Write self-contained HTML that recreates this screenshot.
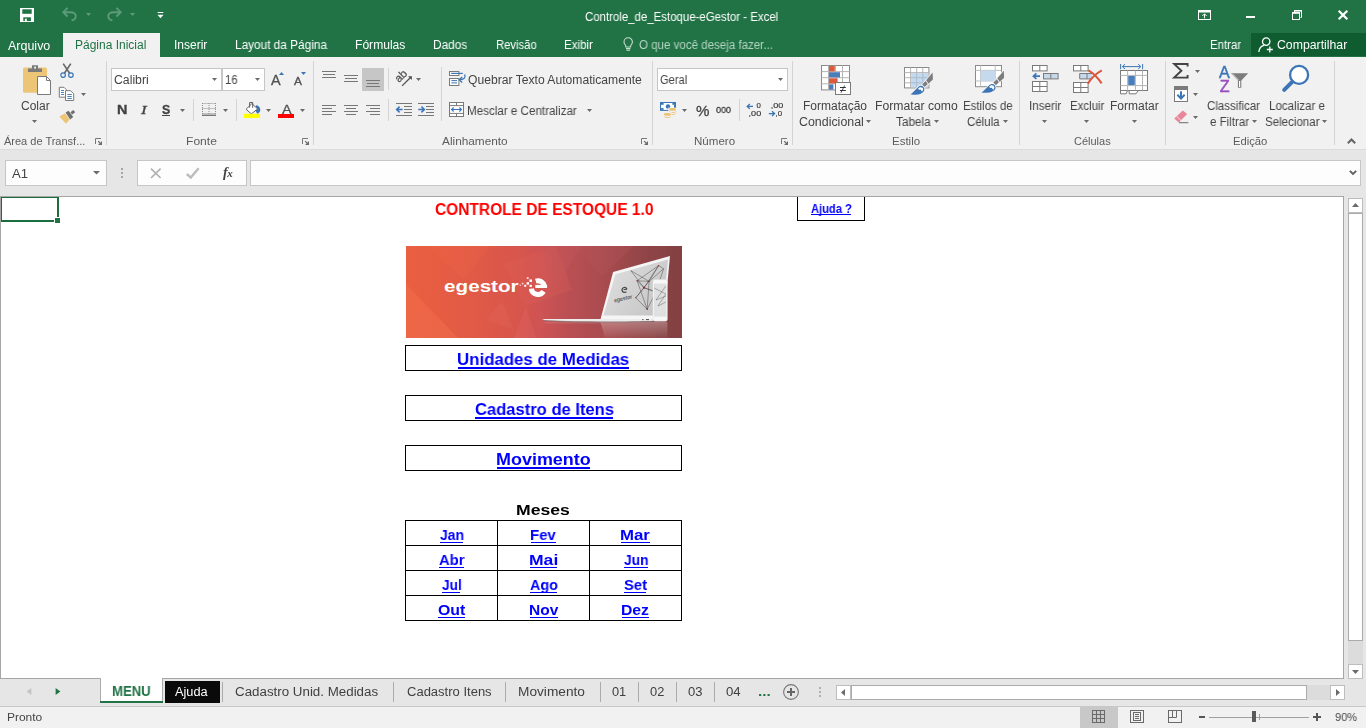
<!DOCTYPE html>
<html lang="pt-BR"><head><meta charset="utf-8"><title>Controle_de_Estoque-eGestor - Excel</title>
<style>
html,body{margin:0;padding:0}
body{width:1366px;height:728px;overflow:hidden;position:relative;background:#e6e6e6;font-family:"Liberation Sans",sans-serif}
.g{position:absolute;left:0;top:0;width:0;height:0}
.b{position:absolute;box-sizing:border-box;display:block}
.t{position:absolute;white-space:nowrap;line-height:20px;transform-origin:0 0;display:block;will-change:transform}
svg{overflow:visible}
.hv{-webkit-text-stroke:0.3px currentColor}
</style></head><body>
<div class="g" id="titlebar">
<div class="b" style="left:0px;top:0px;width:1366px;height:57px;background:#217346"></div>
<span class="t" style="left:584.93px;top:7px;font-size:12px;color:#fff;transform:scaleX(0.9527)">Controle_de_Estoque-eGestor - Excel</span>
<div class="b" style="left:63px;top:33px;width:97px;height:24px;background:#f1f1f1"></div>
<div class="b" style="left:1251px;top:33px;width:115px;height:23px;background:#0f5c30"></div>
<svg class="b" style="left:20px;top:8px" width="14" height="14" viewBox="0 0 14 14"><rect x="0" y="0" width="14" height="14" fill="#fff"/><rect x="2.3" y="1.3" width="9.4" height="4.5" fill="#217346"/><rect x="3.3" y="9.3" width="7.6" height="3.8" fill="#217346"/><rect x="4.9" y="10.7" width="1.9" height="2.6" fill="#fff"/></svg>
<svg class="b" style="left:62px;top:7px" width="16" height="15" viewBox="0 0 16 15"><path d="M1.2 5.2 H8.5 C12.6 5.2 14.6 8 13.6 10.6 C13 12.2 11.5 13.2 9.6 13.6" fill="none" stroke="#5d9b79" stroke-width="1.9"/><path d="M5.6 0.9 L1.3 5.2 L5.6 9.5" fill="none" stroke="#5d9b79" stroke-width="1.9"/></svg>
<svg class="b" style="left:86px;top:13px" width="5" height="3" viewBox="0 0 5 3"><path d="M0 0 H5 L2.5 3 Z" fill="#5d9b79"/></svg>
<svg class="b" style="left:106px;top:7px" width="16" height="15" viewBox="0 0 16 15"><path d="M14.8 5.2 H7.5 C3.4 5.2 1.4 8 2.4 10.6 C3 12.2 4.5 13.2 6.4 13.6" fill="none" stroke="#5d9b79" stroke-width="1.9"/><path d="M10.4 0.9 L14.7 5.2 L10.4 9.5" fill="none" stroke="#5d9b79" stroke-width="1.9"/></svg>
<svg class="b" style="left:130px;top:13px" width="5" height="3" viewBox="0 0 5 3"><path d="M0 0 H5 L2.5 3 Z" fill="#5d9b79"/></svg>
<svg class="b" style="left:157px;top:12px" width="7" height="7" viewBox="0 0 7 7"><rect x="0.7" y="0" width="5.6" height="1" fill="#fff"/><path d="M0.5 2.8 H6.5 L3.5 6.2 Z" fill="#fff"/></svg>
<svg class="b" style="left:1198px;top:10px" width="13" height="10" viewBox="0 0 13 10"><rect x="0.5" y="0.5" width="12" height="9" fill="none" stroke="#fff" stroke-width="1"/><rect x="0.5" y="0.5" width="12" height="2" fill="#fff"/><path d="M6.5 8.3 V4 M4.3 6 L6.5 3.8 L8.7 6" fill="none" stroke="#fff" stroke-width="1"/></svg>
<div class="b" style="left:1246px;top:16px;width:9px;height:2px;background:#fff"></div>
<svg class="b" style="left:1292px;top:10px" width="11" height="10" viewBox="0 0 11 10"><path d="M2.5 2 V0.5 H9.5 V7.5 H8.5" fill="none" stroke="#fff" stroke-width="1"/><rect x="2" y="0" width="8" height="1.6" fill="#fff"/><rect x="0.5" y="2.5" width="7" height="7" fill="none" stroke="#fff" stroke-width="1"/><rect x="0" y="2" width="8" height="1.8" fill="#fff"/></svg>
<svg class="b" style="left:1338px;top:10px" width="10" height="10" viewBox="0 0 10 10"><path d="M0.7 0.7 L9.3 9.3 M9.3 0.7 L0.7 9.3" fill="none" stroke="#fff" stroke-width="2.2"/></svg>
<svg class="b" style="left:623px;top:37px" width="11" height="14" viewBox="0 0 11 14"><path d="M5.2 0.8 C2.6 0.8 1 2.7 1 4.9 C1 6.6 2.2 7.6 2.8 8.8 V10 H7.6 V8.8 C8.2 7.6 9.4 6.6 9.4 4.9 C9.4 2.7 7.8 0.8 5.2 0.8 Z M3 11.6 H7.4 M3.4 13.2 H7" fill="none" stroke="#c3dccb" stroke-width="1.1"/></svg>
<svg class="b" style="left:1258px;top:37px" width="16" height="16" viewBox="0 0 16 16"><circle cx="8.2" cy="4.6" r="3.7" fill="none" stroke="#fff" stroke-width="1.3"/><path d="M0.8 15 C1.3 10.8 3.6 8.9 6 8.4" fill="none" stroke="#fff" stroke-width="1.3"/><path d="M11.8 9.5 V15.5 M8.8 12.5 H14.8" fill="none" stroke="#fff" stroke-width="1.3"/></svg>
<span class="t" style="left:8.00px;top:36px;font-size:12px;color:#fff;transform:scaleX(1.0398)">Arquivo</span>
<span class="t" style="left:75.44px;top:35px;font-size:12px;color:#217346;transform:scaleX(0.9948)">Página Inicial</span>
<span class="t" style="left:173.82px;top:35px;font-size:12px;color:#fff;transform:scaleX(1.0009)">Inserir</span>
<span class="t" style="left:235.06px;top:35px;font-size:12px;color:#fff;transform:scaleX(0.9842)">Layout da Página</span>
<span class="t" style="left:355.03px;top:35px;font-size:12px;color:#fff;transform:scaleX(1.0076)">Fórmulas</span>
<span class="t" style="left:433.25px;top:35px;font-size:12px;color:#fff;transform:scaleX(0.9850)">Dados</span>
<span class="t" style="left:495.50px;top:35px;font-size:12px;color:#fff;transform:scaleX(0.9377)">Revisão</span>
<span class="t" style="left:564.48px;top:35px;font-size:12px;color:#fff;transform:scaleX(0.9633)">Exibir</span>
<span class="t" style="left:1209.79px;top:35px;font-size:12px;color:#fff;transform:scaleX(0.9515)">Entrar</span>
<span class="t" style="left:1276.99px;top:35px;font-size:12px;color:#fff;transform:scaleX(1.0233)">Compartilhar</span>
<span class="t" style="left:638.78px;top:35px;font-size:12px;color:#b4d3c0;transform:scaleX(0.9609)">O que você deseja fazer...</span>
</div>
<div class="g" id="ribbon">
<div class="b" style="left:0px;top:57px;width:1366px;height:92px;background:#f1f1f1"></div>
<div class="b" style="left:0px;top:149px;width:1366px;height:1px;background:#dcdcdc"></div>
<div class="b" style="left:0px;top:150px;width:1366px;height:46px;background:#e6e6e6"></div>
<div class="b" style="left:106px;top:61px;width:1px;height:84px;background:#d4d4d4"></div>
<div class="b" style="left:313px;top:61px;width:1px;height:84px;background:#d4d4d4"></div>
<div class="b" style="left:652px;top:61px;width:1px;height:84px;background:#d4d4d4"></div>
<div class="b" style="left:792px;top:61px;width:1px;height:84px;background:#d4d4d4"></div>
<div class="b" style="left:1019px;top:61px;width:1px;height:84px;background:#d4d4d4"></div>
<div class="b" style="left:1165px;top:61px;width:1px;height:84px;background:#d4d4d4"></div>
<div class="b" style="left:1334px;top:61px;width:1px;height:84px;background:#d4d4d4"></div>
<div class="g" id="grp-clipboard">
<svg class="b" style="left:22px;top:64px" width="30" height="32" viewBox="0 0 30 32"><rect x="1" y="3.6" width="24" height="25.2" rx="1.6" fill="#ecc577"/><path d="M6 8 V4.4 H10 V1.2 H16 V4.4 H20 V8 Z" fill="#7a7a7a"/><rect x="12.2" y="2.6" width="1.8" height="2" fill="#f1f1f1"/><path d="M15.5 12.5 H24.5 L28.5 16.5 V30.5 H15.5 Z" fill="#fff" stroke="#7a7a7a" stroke-width="1"/><path d="M24.5 12.5 V16.5 H28.5" fill="none" stroke="#7a7a7a" stroke-width="1"/></svg>
<span class="t" style="left:21.01px;top:96px;font-size:12px;color:#444;transform:scaleX(0.9892)">Colar</span>
<svg class="b" style="left:32px;top:120px" width="5" height="3" viewBox="0 0 5 3"><path d="M0 0 H5 L2.5 3 Z" fill="#6a6a6a"/></svg>
<svg class="b" style="left:59px;top:63px" width="16" height="16" viewBox="0 0 16 16"><path d="M4.2 0.6 L10.6 10.2 M11.8 0.6 L5.4 10.2" fill="none" stroke="#6a6a6a" stroke-width="1.7"/><circle cx="4.1" cy="12.1" r="2.3" fill="none" stroke="#3b75b7" stroke-width="1.2"/><circle cx="11.9" cy="12.1" r="2.3" fill="none" stroke="#3b75b7" stroke-width="1.2"/></svg>
<svg class="b" style="left:58px;top:86px" width="17" height="16" viewBox="0 0 17 16"><path d="M1.3 1.3 H6 L8.3 3.6 V11.2 H1.3 Z" fill="#fff" stroke="#7a7a7a" stroke-width="1"/><path d="M3 4.5 H6 M3 6.5 H6 M3 8.5 H6" stroke="#3b75b7" stroke-width="0.9"/><path d="M7.5 4.7 H12.6 L15.7 7.8 V14.5 H7.5 Z" fill="#fff" stroke="#7a7a7a" stroke-width="1"/><path d="M9.3 8.5 H13.8 M9.3 10.5 H13.8 M9.3 12.5 H13.8" stroke="#3b75b7" stroke-width="0.9"/></svg>
<svg class="b" style="left:81px;top:93px" width="5" height="3" viewBox="0 0 5 3"><path d="M0 0 H5 L2.5 3 Z" fill="#6a6a6a"/></svg>
<svg class="b" style="left:59px;top:110px" width="17" height="15" viewBox="0 0 17 15"><path d="M0.4 6.6 L6 3.2 L10.6 9.6 L7 13.8 Z" fill="#ecc577"/><path d="M6.6 2.6 L9.6 0.8 L14.2 7 L11.2 9.4 Z" fill="#6f6f6f"/><path d="M11.4 2.2 L14.4 0 L16.2 2.2 L13.2 4.6 Z" fill="#6f6f6f"/></svg>
<span class="t" style="left:4.40px;top:131px;font-size:11px;color:#5c5c5c;transform:scaleX(0.9972)">Área de Transf...</span>
<svg class="b" style="left:95px;top:138px" width="7" height="7" viewBox="0 0 7 7"><path d="M0.5 6 V0.5 H6" fill="none" stroke="#787878" stroke-width="1"/><path d="M7 3 V7 H3 Z" fill="#6a6a6a"/><path d="M3.2 3.2 L5 5" stroke="#6a6a6a" stroke-width="1.2"/></svg>
</div>
<div class="g" id="grp-font">
<div class="b" style="left:111px;top:68px;width:111px;height:23px;background:#fff;border:1px solid #c6c6c6"></div>
<div class="b" style="left:222px;top:68px;width:43px;height:23px;background:#fff;border:1px solid #c6c6c6"></div>
<span class="t" style="left:113.99px;top:70px;font-size:12px;color:#444;transform:scaleX(1.0212)">Calibri</span>
<svg class="b" style="left:212px;top:78px" width="5" height="3" viewBox="0 0 5 3"><path d="M0 0 H5 L2.5 3 Z" fill="#6a6a6a"/></svg>
<span class="t" style="left:225.05px;top:70px;font-size:12px;color:#444;transform:scaleX(0.9404)">16</span>
<svg class="b" style="left:255px;top:78px" width="5" height="3" viewBox="0 0 5 3"><path d="M0 0 H5 L2.5 3 Z" fill="#6a6a6a"/></svg>
<span class="t hv" style="left:271.20px;top:70px;font-size:14px;color:#505050;transform:scaleX(1.0311)">A</span>
<svg class="b" style="left:279px;top:72px" width="5" height="3" viewBox="0 0 5 3"><path d="M0 3 H5 L2.5 0 Z" fill="#3b75b7"/></svg>
<span class="t hv" style="left:294.00px;top:71px;font-size:11px;color:#505050;transform:scaleX(1.0800)">A</span>
<svg class="b" style="left:301px;top:72px" width="5" height="3" viewBox="0 0 5 3"><path d="M0 0 H5 L2.5 3 Z" fill="#3b75b7"/></svg>
<span class="t hv" style="left:116.86px;top:100px;font-size:12.5px;color:#404040;transform:scaleX(1.1525);font-weight:bold">N</span>
<span class="t" style="left:140.6px;top:100px;font-size:13.5px;color:#454545;font-family:'Liberation Serif',serif;font-style:italic;transform:scaleX(1.25);-webkit-text-stroke:0.35px currentColor">I</span>
<span class="t hv" style="left:161.66px;top:100px;font-size:12.5px;color:#404040;transform:scaleX(0.9826);font-weight:bold">S</span>
<div class="b" style="left:162px;top:115px;width:8px;height:1px;background:#444"></div>
<svg class="b" style="left:180px;top:109px" width="5" height="3" viewBox="0 0 5 3"><path d="M0 0 H5 L2.5 3 Z" fill="#6a6a6a"/></svg>
<div class="b" style="left:193px;top:99px;width:1px;height:22px;background:#d4d4d4"></div>
<div class="b" style="left:236px;top:99px;width:1px;height:22px;background:#d4d4d4"></div>
<svg class="b" style="left:202px;top:102px" width="14" height="14" viewBox="0 0 14 14"><path d="M0.5 1.5 H13.5 M0.5 6.5 H13.5 M0.5 11.5 H13.5" stroke="#8e8e8e" stroke-width="1" stroke-dasharray="1 1"/><path d="M0.5 1 V12 M7 1 V12 M13.5 1 V12" stroke="#8e8e8e" stroke-width="1" stroke-dasharray="1 1"/><rect x="0" y="12.6" width="14" height="1.3" fill="#6a6a6a"/></svg>
<svg class="b" style="left:223px;top:109px" width="5" height="3" viewBox="0 0 5 3"><path d="M0 0 H5 L2.5 3 Z" fill="#6a6a6a"/></svg>
<svg class="b" style="left:243px;top:101px" width="18" height="18" viewBox="0 0 18 18"><path d="M13.2 4.3 C16.8 4.8 18.2 8.6 16.7 11 L14.4 12.9 L12 9 Z" fill="#3b75b7"/><path d="M8.9 2.6 L14.7 7.9 L8.3 12.9 L3.1 8.3 Z" fill="#fff" stroke="#5f5f5f" stroke-width="1"/><path d="M6.6 6.6 V1.5 H9.7 V6.9" fill="none" stroke="#5f5f5f" stroke-width="1"/><rect x="0.95" y="12.8" width="16.1" height="4.2" fill="#ffff00"/></svg>
<svg class="b" style="left:266px;top:109px" width="5" height="3" viewBox="0 0 5 3"><path d="M0 0 H5 L2.5 3 Z" fill="#6a6a6a"/></svg>
<span class="t hv" style="left:281.70px;top:100px;font-size:13.5px;color:#505050;transform:scaleX(1.0693)">A</span>
<div class="b" style="left:278px;top:114px;width:16px;height:4px;background:#ff0000"></div>
<svg class="b" style="left:300px;top:109px" width="5" height="3" viewBox="0 0 5 3"><path d="M0 0 H5 L2.5 3 Z" fill="#6a6a6a"/></svg>
<span class="t" style="left:186.03px;top:131px;font-size:11px;color:#5c5c5c;transform:scaleX(1.0988)">Fonte</span>
<svg class="b" style="left:302px;top:138px" width="7" height="7" viewBox="0 0 7 7"><path d="M0.5 6 V0.5 H6" fill="none" stroke="#787878" stroke-width="1"/><path d="M7 3 V7 H3 Z" fill="#6a6a6a"/><path d="M3.2 3.2 L5 5" stroke="#6a6a6a" stroke-width="1.2"/></svg>
</div>
<div class="g" id="grp-alignment">
<div class="b" style="left:322px;top:71px;width:14px;height:1px;background:#777"></div>
<div class="b" style="left:323px;top:74px;width:12px;height:1px;background:#777"></div>
<div class="b" style="left:322px;top:77px;width:14px;height:1px;background:#777"></div>
<div class="b" style="left:344px;top:75px;width:14px;height:1px;background:#777"></div>
<div class="b" style="left:345px;top:78px;width:12px;height:1px;background:#777"></div>
<div class="b" style="left:344px;top:81px;width:14px;height:1px;background:#777"></div>
<div class="b" style="left:362px;top:68px;width:22px;height:23px;background:#c6c6c6"></div>
<div class="b" style="left:366px;top:80px;width:14px;height:1px;background:#777"></div>
<div class="b" style="left:367px;top:83px;width:12px;height:1px;background:#777"></div>
<div class="b" style="left:366px;top:86px;width:14px;height:1px;background:#777"></div>
<div class="b" style="left:388px;top:68px;width:1px;height:22px;background:#d4d4d4"></div>
<div class="b" style="left:388px;top:99px;width:1px;height:22px;background:#d4d4d4"></div>
<div class="b" style="left:322px;top:105px;width:14px;height:1px;background:#777"></div>
<div class="b" style="left:322px;top:108px;width:10px;height:1px;background:#777"></div>
<div class="b" style="left:322px;top:111px;width:14px;height:1px;background:#777"></div>
<div class="b" style="left:322px;top:114px;width:10px;height:1px;background:#777"></div>
<div class="b" style="left:344px;top:105px;width:14px;height:1px;background:#777"></div>
<div class="b" style="left:346px;top:108px;width:10px;height:1px;background:#777"></div>
<div class="b" style="left:344px;top:111px;width:14px;height:1px;background:#777"></div>
<div class="b" style="left:346px;top:114px;width:10px;height:1px;background:#777"></div>
<div class="b" style="left:366px;top:105px;width:14px;height:1px;background:#777"></div>
<div class="b" style="left:370px;top:108px;width:10px;height:1px;background:#777"></div>
<div class="b" style="left:366px;top:111px;width:14px;height:1px;background:#777"></div>
<div class="b" style="left:370px;top:114px;width:10px;height:1px;background:#777"></div>
<svg class="b" style="left:396px;top:70px" width="17" height="17" viewBox="0 0 17 17"><text x="0" y="0" font-size="11.2" fill="#505050" stroke="#505050" stroke-width="0.25" transform="translate(3.1,13.1) rotate(-45)" font-family="Liberation Sans, sans-serif">ab</text><path d="M6.1 15.9 L15 7" fill="none" stroke="#505050" stroke-width="1.3"/><path d="M12 6.2 H15.9 V10.1 Z" fill="#505050"/></svg>
<svg class="b" style="left:416px;top:78px" width="5" height="3" viewBox="0 0 5 3"><path d="M0 0 H5 L2.5 3 Z" fill="#6a6a6a"/></svg>
<svg class="b" style="left:396px;top:102px" width="16" height="15" viewBox="0 0 16 15"><path d="M0 1.5 H16" stroke="#777" stroke-width="1"/><path d="M8 4.5 H16" stroke="#777" stroke-width="1"/><path d="M8 7.5 H16" stroke="#777" stroke-width="1"/><path d="M8 10.5 H16" stroke="#777" stroke-width="1"/><path d="M0 13.5 H16" stroke="#777" stroke-width="1"/><path d="M6.6 7.5 H1 M3.6 4.6 L0.6 7.5 L3.6 10.4" fill="none" stroke="#3b75b7" stroke-width="1.5"/></svg>
<svg class="b" style="left:418px;top:102px" width="16" height="15" viewBox="0 0 16 15"><path d="M0 1.5 H16" stroke="#777" stroke-width="1"/><path d="M8 4.5 H16" stroke="#777" stroke-width="1"/><path d="M8 7.5 H16" stroke="#777" stroke-width="1"/><path d="M8 10.5 H16" stroke="#777" stroke-width="1"/><path d="M0 13.5 H16" stroke="#777" stroke-width="1"/><path d="M0.3 7.5 H6 M3.4 4.6 L6.4 7.5 L3.4 10.4" fill="none" stroke="#3b75b7" stroke-width="1.5"/></svg>
<div class="b" style="left:441px;top:67px;width:1px;height:54px;background:#d4d4d4"></div>
<svg class="b" style="left:449px;top:70px" width="17" height="17" viewBox="0 0 17 17"><rect x="0.5" y="1.5" width="9.4" height="4" fill="#fff" stroke="#7a7a7a" stroke-width="1"/><rect x="0.5" y="8.5" width="9.4" height="7" fill="#fff" stroke="#7a7a7a" stroke-width="1"/><path d="M2.2 3.4 H13.8" fill="none" stroke="#3b75b7" stroke-width="1.2"/><path d="M15.8 4.4 C16.8 8.4 14.4 9.7 10.6 9.7" fill="none" stroke="#3b75b7" stroke-width="1.3"/><path d="M13.2 7 L10.3 9.7 L13.2 12.4" fill="none" stroke="#3b75b7" stroke-width="1.3"/><path d="M2.4 10.6 H8 M2.4 12.9 H8" stroke="#3b75b7" stroke-width="1"/></svg>
<span class="t" style="left:467.75px;top:70px;font-size:12px;color:#444;transform:scaleX(1.0110)">Quebrar Texto Automaticamente</span>
<svg class="b" style="left:449px;top:102px" width="15" height="15" viewBox="0 0 15 15"><rect x="0.5" y="0.5" width="14" height="14" fill="#fff" stroke="#7a7a7a" stroke-width="1"/><path d="M0.5 3.6 H14.5 M0.5 11.4 H14.5 M7.5 0.5 V3.6 M7.5 11.4 V14.5" stroke="#7a7a7a" stroke-width="1"/><path d="M2.6 7.5 H12.4 M4.6 5.5 L2.6 7.5 L4.6 9.5 M10.4 5.5 L12.4 7.5 L10.4 9.5" fill="none" stroke="#3b75b7" stroke-width="1.15"/></svg>
<span class="t" style="left:467.37px;top:101px;font-size:12px;color:#444;transform:scaleX(0.9685)">Mesclar e Centralizar</span>
<svg class="b" style="left:587px;top:109px" width="5" height="3" viewBox="0 0 5 3"><path d="M0 0 H5 L2.5 3 Z" fill="#6a6a6a"/></svg>
<span class="t" style="left:442.20px;top:131px;font-size:11px;color:#5c5c5c;transform:scaleX(1.0743)">Alinhamento</span>
<svg class="b" style="left:641px;top:138px" width="7" height="7" viewBox="0 0 7 7"><path d="M0.5 6 V0.5 H6" fill="none" stroke="#787878" stroke-width="1"/><path d="M7 3 V7 H3 Z" fill="#6a6a6a"/><path d="M3.2 3.2 L5 5" stroke="#6a6a6a" stroke-width="1.2"/></svg>
</div>
<div class="g" id="grp-number">
<div class="b" style="left:657px;top:68px;width:131px;height:23px;background:#fff;border:1px solid #c6c6c6"></div>
<span class="t" style="left:660.24px;top:70px;font-size:12px;color:#444;transform:scaleX(0.9263)">Geral</span>
<svg class="b" style="left:778px;top:78px" width="5" height="3" viewBox="0 0 5 3"><path d="M0 0 H5 L2.5 3 Z" fill="#6a6a6a"/></svg>
<svg class="b" style="left:660px;top:101px" width="17" height="18" viewBox="0 0 17 18"><rect x="0" y="1" width="16" height="8.9" fill="#3b75b7"/><rect x="1" y="2" width="14" height="6.9" fill="#fff"/><rect x="1" y="2" width="2.6" height="1.8" fill="#3b75b7"/><rect x="12.4" y="2" width="2.6" height="1.8" fill="#3b75b7"/><rect x="1" y="7.1" width="2.6" height="1.8" fill="#3b75b7"/><rect x="14" y="4" width="1.4" height="3" fill="#3b75b7"/><circle cx="8" cy="5.4" r="2.25" fill="#3b75b7"/><rect x="8.3" y="6.6" width="8.7" height="9" fill="#f1f1f1"/><rect x="3.2" y="11.6" width="9" height="6.4" fill="#f1f1f1"/><ellipse cx="12.5" cy="8.4" rx="3.5" ry="1.4" fill="#ecc170"/><rect x="11.3" y="11.2" width="3.8" height="0.8" fill="#ecc170"/><rect x="11.8" y="13.2" width="3" height="0.8" fill="#ecc170"/><rect x="9" y="10.2" width="0.9" height="0.7" fill="#ecc170"/><rect x="15.2" y="10.2" width="0.9" height="0.7" fill="#ecc170"/><rect x="15.2" y="12.2" width="0.9" height="0.7" fill="#ecc170"/><ellipse cx="7.4" cy="13.4" rx="3.5" ry="1.3" fill="#ecc170"/><rect x="4.9" y="16.2" width="5" height="0.8" fill="#ecc170"/><rect x="3.9" y="15.3" width="0.9" height="0.7" fill="#ecc170"/><rect x="10" y="15.3" width="0.9" height="0.7" fill="#ecc170"/></svg>
<svg class="b" style="left:682px;top:109px" width="5" height="3" viewBox="0 0 5 3"><path d="M0 0 H5 L2.5 3 Z" fill="#6a6a6a"/></svg>
<span class="t hv" style="left:695.97px;top:101px;font-size:15px;color:#444;transform:scaleX(1.0081)">%</span>
<span class="t hv" style="left:716.46px;top:100px;font-size:9.7px;color:#3a3a3a;transform:scaleX(0.9257)">000</span>
<div class="b" style="left:739px;top:99px;width:1px;height:22px;background:#d4d4d4"></div>
<svg class="b" style="left:746px;top:102px" width="17" height="16" viewBox="0 0 17 16"><path d="M7 4.4 H1.4 M3.8 2 L1.2 4.4 L3.8 6.8" fill="none" stroke="#3b75b7" stroke-width="1.3"/><text x="10.6" y="6.4" font-size="7.8" fill="#333" stroke="#333" stroke-width="0.15" font-family="Liberation Sans, sans-serif">0</text><text x="2.6" y="13.8" font-size="7.8" fill="#333" stroke="#333" stroke-width="0.15" font-family="Liberation Sans, sans-serif" textLength="12.6" lengthAdjust="spacingAndGlyphs">,00</text></svg>
<svg class="b" style="left:768px;top:102px" width="17" height="16" viewBox="0 0 17 16"><text x="2.8" y="6.4" font-size="7.8" fill="#333" stroke="#333" stroke-width="0.15" font-family="Liberation Sans, sans-serif" textLength="12.6" lengthAdjust="spacingAndGlyphs">,00</text><path d="M0.8 11.6 H6.4 M4 9.2 L6.6 11.6 L4 14" fill="none" stroke="#3b75b7" stroke-width="1.3"/><text x="7.6" y="13.8" font-size="7.8" fill="#333" stroke="#333" stroke-width="0.15" font-family="Liberation Sans, sans-serif">,0</text></svg>
<span class="t" style="left:693.78px;top:131px;font-size:11px;color:#5c5c5c;transform:scaleX(1.0507)">Número</span>
<svg class="b" style="left:781px;top:138px" width="7" height="7" viewBox="0 0 7 7"><path d="M0.5 6 V0.5 H6" fill="none" stroke="#787878" stroke-width="1"/><path d="M7 3 V7 H3 Z" fill="#6a6a6a"/><path d="M3.2 3.2 L5 5" stroke="#6a6a6a" stroke-width="1.2"/></svg>
</div>
<div class="g" id="grp-styles">
<svg class="b" style="left:820px;top:64px" width="32" height="32" viewBox="0 0 32 32"><rect x="1.5" y="1.5" width="28" height="24.4" fill="#fff" stroke="#8a8a8a" stroke-width="1"/><path d="M8.5 1.5 V25.9 M15.5 1.5 V25.9 M22.5 1.5 V25.9 M1.5 7.6 H29.5 M1.5 13.7 H29.5 M1.5 19.799999999999997 H29.5 " stroke="#b4b4b4" stroke-width="1" fill="none"/><rect x="9" y="2" width="5.8" height="5.4" fill="#dc5b3d"/><rect x="9" y="8.2" width="11" height="5.2" fill="#4a7ebb"/><rect x="9" y="14.3" width="8.6" height="5.2" fill="#dc5b3d"/><rect x="9" y="20.4" width="4.4" height="5.2" fill="#4a7ebb"/><rect x="15.5" y="18.5" width="15" height="12" fill="#fff" stroke="#7a7a7a" stroke-width="1"/><text x="23" y="28.6" font-size="12" text-anchor="middle" fill="#333" font-family="Liberation Sans, sans-serif">≠</text></svg>
<span class="t" style="left:803.45px;top:96px;font-size:12px;color:#444;transform:scaleX(0.9939)">Formatação</span>
<span class="t" style="left:798.68px;top:112px;font-size:12px;color:#444;transform:scaleX(1.0339)">Condicional</span>
<svg class="b" style="left:866px;top:120px" width="5" height="3" viewBox="0 0 5 3"><path d="M0 0 H5 L2.5 3 Z" fill="#6a6a6a"/></svg>
<svg class="b" style="left:903px;top:64px" width="34" height="32" viewBox="0 0 34 32"><rect x="1.5" y="3.5" width="24.4" height="20.4" fill="#fff" stroke="#8a8a8a" stroke-width="1"/><path d="M7.6 3.5 V23.9 M13.7 3.5 V23.9 M19.799999999999997 3.5 V23.9 M1.5 8.6 H25.9 M1.5 13.7 H25.9 M1.5 18.799999999999997 H25.9 " stroke="#b4b4b4" stroke-width="1" fill="none"/><rect x="8.1" y="9.1" width="17.3" height="14.3" fill="#c5d8ec"/><path d="M13.7 9 V23.4 M19.8 9 V23.4 M8 13.7 H25.4 M8 18.8 H25.4" stroke="#a9bdd2" stroke-width="1" fill="none"/><polygon points="29.6,8.6 29.9,15.6 25.4,19.8 23.0,16.5" fill="#7c7c7c" stroke="#f1f1f1" stroke-width="1.6" paint-order="stroke"/><polygon points="19.2,20.5 22.6,17.1 24.7,20.1 21.5,23.1" fill="#7c7c7c" stroke="#f1f1f1" stroke-width="1.6" paint-order="stroke"/><path d="M7.4 30.6 C10.4 28.0 12.9 25.0 14.8 23.400000000000002 A3.6 3.6 0 1 1 18.8 28.900000000000002 C16.4 30.8 11.4 30.8 7.4 30.6 Z" fill="#3b75b7" stroke="#f1f1f1" stroke-width="1.6" paint-order="stroke"/><path d="M15.0 25.0 C16.0 22.6 20.0 22.6 20.200000000000003 25.6 L19.0 27.8 L17.6 25.6 L16.200000000000003 25.8 Z" fill="#fff"/></svg>
<span class="t" style="left:875.22px;top:96px;font-size:12px;color:#444;transform:scaleX(1.0176)">Formatar como</span>
<span class="t" style="left:896.16px;top:112px;font-size:12px;color:#444;transform:scaleX(0.9792)">Tabela</span>
<svg class="b" style="left:934px;top:120px" width="5" height="3" viewBox="0 0 5 3"><path d="M0 0 H5 L2.5 3 Z" fill="#6a6a6a"/></svg>
<svg class="b" style="left:974px;top:64px" width="34" height="32" viewBox="0 0 34 32"><rect x="1.5" y="1.5" width="26" height="21.2" fill="#fff" stroke="#8a8a8a" stroke-width="1"/><path d="M6.6 1.5 V22.7 M21.2 1.5 V22.7 M1.5 6.4 H27.5 M1.5 17 H27.5" stroke="#bdbdbd" stroke-width="1" fill="none"/><rect x="6.6" y="6.4" width="14.6" height="10.6" fill="#c5d8ec"/><polygon points="29.8,6.7 30.1,13.7 25.6,17.9 23.2,14.6" fill="#7c7c7c" stroke="#f1f1f1" stroke-width="1.6" paint-order="stroke"/><polygon points="19.4,18.6 22.8,15.2 24.9,18.2 21.7,21.2" fill="#7c7c7c" stroke="#f1f1f1" stroke-width="1.6" paint-order="stroke"/><path d="M7.6 28.7 C10.6 26.099999999999998 13.1 23.1 15.0 21.5 A3.6 3.6 0 1 1 19.0 27.0 C16.6 28.9 11.6 28.9 7.6 28.7 Z" fill="#3b75b7" stroke="#f1f1f1" stroke-width="1.6" paint-order="stroke"/><path d="M15.2 23.1 C16.2 20.7 20.2 20.7 20.4 23.7 L19.2 25.9 L17.799999999999997 23.7 L16.4 23.9 Z" fill="#fff"/></svg>
<span class="t" style="left:962.78px;top:96px;font-size:12px;color:#444;transform:scaleX(0.9555)">Estilos de</span>
<span class="t" style="left:967.23px;top:112px;font-size:12px;color:#444;transform:scaleX(0.9567)">Célula</span>
<svg class="b" style="left:1003px;top:120px" width="5" height="3" viewBox="0 0 5 3"><path d="M0 0 H5 L2.5 3 Z" fill="#6a6a6a"/></svg>
<span class="t" style="left:891.78px;top:131px;font-size:11px;color:#5c5c5c;transform:scaleX(1.0440)">Estilo</span>
</div>
<div class="g" id="grp-cells">
<svg class="b" style="left:1031px;top:64px" width="28" height="30" viewBox="0 0 28 30"><rect x="1.5" y="1.5" width="14.6" height="5.4" fill="#fff" stroke="#7a7a7a" stroke-width="1"/><path d="M8.8 1.5 V6.9" stroke="#7a7a7a" stroke-width="1"/><rect x="12.5" y="9.5" width="14.6" height="5.4" fill="#c5d8ec" stroke="#7a7a7a" stroke-width="1"/><path d="M19.8 9.5 V14.9" stroke="#7a7a7a" stroke-width="1"/><path d="M9 12.2 H2.6 M5.4 9.4 L2.4 12.2 L5.4 15" fill="none" stroke="#3b75b7" stroke-width="1.7"/><rect x="1.5" y="17.5" width="14.6" height="10" fill="#fff" stroke="#7a7a7a" stroke-width="1"/><path d="M8.8 17.5 V27.5 M1.5 22.5 H16.1" stroke="#7a7a7a" stroke-width="1"/></svg>
<span class="t" style="left:1028.55px;top:96px;font-size:12px;color:#444;transform:scaleX(0.9698)">Inserir</span>
<svg class="b" style="left:1042px;top:120px" width="5" height="3" viewBox="0 0 5 3"><path d="M0 0 H5 L2.5 3 Z" fill="#6a6a6a"/></svg>
<svg class="b" style="left:1072px;top:64px" width="32" height="30" viewBox="0 0 32 30"><rect x="1.5" y="1.5" width="14.6" height="5.4" fill="#fff" stroke="#7a7a7a" stroke-width="1"/><path d="M8.8 1.5 V6.9" stroke="#7a7a7a" stroke-width="1"/><path d="M20 9.5 H7.7 V14.9 H20" fill="#c5d8ec" stroke="#7a7a7a" stroke-width="1"/><path d="M15 9.5 V14.9" stroke="#7a7a7a" stroke-width="1"/><rect x="1.5" y="18.5" width="14.6" height="10" fill="#fff" stroke="#7a7a7a" stroke-width="1"/><path d="M8.8 18.5 V28.5 M1.5 23.5 H16.1" stroke="#7a7a7a" stroke-width="1"/><path d="M16.4 6.4 C21 9 26 14 29.6 19.4 M29.8 6.4 C24 9.6 19.4 14 15.8 19.6" fill="none" stroke="#d9573b" stroke-width="2"/></svg>
<span class="t" style="left:1069.69px;top:96px;font-size:12px;color:#444;transform:scaleX(0.9524)">Excluir</span>
<svg class="b" style="left:1084px;top:120px" width="5" height="3" viewBox="0 0 5 3"><path d="M0 0 H5 L2.5 3 Z" fill="#6a6a6a"/></svg>
<svg class="b" style="left:1119px;top:63px" width="30" height="32" viewBox="0 0 30 32"><path d="M1.6 1 V6.2 M23.6 1 V6.2 M3.4 3.6 H21.8 M6 1.2 L3.4 3.6 L6 6 M19.2 1.2 L21.8 3.6 L19.2 6" fill="none" stroke="#3b75b7" stroke-width="1"/><path d="M1.5 27.5 H8.4 L7.2 30.8 H1.5 Z M10.2 27.5 H19.4 L17 30.8 H10.2 Z" fill="#fff" stroke="#7a7a7a" stroke-width="1"/><rect x="1.5" y="7.5" width="27" height="20" fill="#fff" stroke="#7a7a7a" stroke-width="1"/><path d="M8.6 7.5 V27.5 M16.4 7.5 V27.5 M23.5 7.5 V27.5 M1.5 12.4 H28.5 M1.5 22.6 H28.5" stroke="#b4b4b4" stroke-width="1" fill="none"/><rect x="9.2" y="13" width="6.6" height="9" fill="#4a7ebb"/></svg>
<span class="t" style="left:1109.55px;top:96px;font-size:12px;color:#444;transform:scaleX(0.9912)">Formatar</span>
<svg class="b" style="left:1132px;top:120px" width="5" height="3" viewBox="0 0 5 3"><path d="M0 0 H5 L2.5 3 Z" fill="#6a6a6a"/></svg>
<span class="t" style="left:1074.15px;top:131px;font-size:11px;color:#5c5c5c;transform:scaleX(0.9986)">Células</span>
</div>
<div class="g" id="grp-editing">
<svg class="b" style="left:1173px;top:63px" width="16" height="16" viewBox="0 0 16 16"><path d="M14.6 3.6 V1 H1.2 L8.4 7.8 L1.2 14.6 H14.6 V12" fill="none" stroke="#444" stroke-width="1.9" stroke-linejoin="miter"/></svg>
<svg class="b" style="left:1195px;top:70px" width="5" height="3" viewBox="0 0 5 3"><path d="M0 0 H5 L2.5 3 Z" fill="#6a6a6a"/></svg>
<svg class="b" style="left:1174px;top:86px" width="14" height="16" viewBox="0 0 14 16"><rect x="0.5" y="0.5" width="13" height="15" fill="#fff" stroke="#7a7a7a" stroke-width="1"/><rect x="0" y="0" width="14" height="4" fill="#7a7a7a"/><path d="M7 5.2 V12.4 M3.4 8.8 L7 12.6 L10.6 8.8" fill="none" stroke="#3b75b7" stroke-width="2"/></svg>
<svg class="b" style="left:1193px;top:93px" width="5" height="3" viewBox="0 0 5 3"><path d="M0 0 H5 L2.5 3 Z" fill="#6a6a6a"/></svg>
<svg class="b" style="left:1174px;top:110px" width="15" height="14" viewBox="0 0 15 14"><path d="M0.2 8.4 L8.8 0.4 L13.2 4 L4.8 12.4 Z" fill="#e8869a"/><path d="M2.4 6.2 L7 10.4" stroke="#f1f1f1" stroke-width="0.8"/><rect x="5" y="12.2" width="9.4" height="1" fill="#6a6a6a"/></svg>
<svg class="b" style="left:1193px;top:116px" width="5" height="3" viewBox="0 0 5 3"><path d="M0 0 H5 L2.5 3 Z" fill="#6a6a6a"/></svg>
<svg class="b" style="left:1218px;top:65px" width="31" height="28" viewBox="0 0 31 28"><text x="1.1" y="12.9" font-size="16.5" fill="#3b75b7" stroke="#3b75b7" stroke-width="0.45" font-family="Liberation Sans, sans-serif" textLength="10.8" lengthAdjust="spacingAndGlyphs">A</text><text x="1.7" y="27" font-size="16.5" fill="#9b4fc0" stroke="#9b4fc0" stroke-width="0.45" font-family="Liberation Sans, sans-serif" textLength="9.9" lengthAdjust="spacingAndGlyphs">Z</text><path d="M13 8.3 H30.2 L23.3 15.6 V22.8 H19.9 V15.6 Z" fill="#7c7c7c"/><rect x="21" y="16" width="1.2" height="6" fill="#fff"/><path d="M14.6 9.1 L20.6 15.2" stroke="#f1f1f1" stroke-width="0.9"/></svg>
<span class="t" style="left:1206.93px;top:96px;font-size:12px;color:#444;transform:scaleX(0.9566)">Classificar</span>
<span class="t" style="left:1210.11px;top:112px;font-size:12px;color:#444;transform:scaleX(0.9602)">e Filtrar</span>
<svg class="b" style="left:1252px;top:120px" width="5" height="3" viewBox="0 0 5 3"><path d="M0 0 H5 L2.5 3 Z" fill="#6a6a6a"/></svg>
<svg class="b" style="left:1281px;top:64px" width="30" height="30" viewBox="0 0 30 30"><circle cx="18.1" cy="10.9" r="9" fill="#fff" stroke="#3b75b7" stroke-width="2.3"/><path d="M11.2 17.8 L3.2 25.8" stroke="#3b75b7" stroke-width="4" stroke-linecap="round"/></svg>
<span class="t" style="left:1268.67px;top:96px;font-size:12px;color:#444;transform:scaleX(0.9655)">Localizar e</span>
<span class="t" style="left:1264.68px;top:112px;font-size:12px;color:#444;transform:scaleX(0.9611)">Selecionar</span>
<svg class="b" style="left:1322px;top:120px" width="5" height="3" viewBox="0 0 5 3"><path d="M0 0 H5 L2.5 3 Z" fill="#6a6a6a"/></svg>
<span class="t" style="left:1232.60px;top:131px;font-size:11px;color:#5c5c5c;transform:scaleX(1.0213)">Edição</span>
<svg class="b" style="left:1347px;top:137px" width="9" height="7" viewBox="0 0 9 7"><path d="M0.8 6.2 L4.5 2.4 L8.2 6.2" fill="none" stroke="#666" stroke-width="2.1"/></svg>
</div>
</div>
<div class="g" id="formulabar">
<div class="b" style="left:5px;top:160px;width:102px;height:26px;background:#fdfdfd;border:1px solid #c6c6c6"></div>
<span class="t" style="left:12.30px;top:164px;font-size:12px;color:#444;transform:scaleX(1.0922)">A1</span>
<svg class="b" style="left:93px;top:171px" width="7" height="4" viewBox="0 0 7 4"><path d="M0 0 H7 L3.5 3.6 Z" fill="#6a6a6a"/></svg>
<div class="b" style="left:121px;top:168px;width:2px;height:2px;background:#a6a6a6"></div>
<div class="b" style="left:121px;top:172px;width:2px;height:2px;background:#a6a6a6"></div>
<div class="b" style="left:121px;top:176px;width:2px;height:2px;background:#a6a6a6"></div>
<div class="b" style="left:137px;top:160px;width:110px;height:26px;background:#fdfdfd;border:1px solid #c6c6c6"></div>
<svg class="b" style="left:150px;top:168px" width="12" height="11" viewBox="0 0 12 11"><path d="M1 0.6 L10.6 10 M10.6 0.6 L1 10" fill="none" stroke="#b0b0b0" stroke-width="1.6"/></svg>
<svg class="b" style="left:186px;top:167px" width="14" height="12" viewBox="0 0 14 12"><path d="M0.8 7 L4.8 10.6 L12.6 1.2" fill="none" stroke="#bcbcbc" stroke-width="2.4"/></svg>
<span class="t" style="left:222.5px;top:163px;font-size:14px;color:#444;font-family:'Liberation Serif',serif;font-style:italic;font-weight:bold;letter-spacing:-0.5px">f<span style="font-size:11px">x</span></span>
<div class="b" style="left:250px;top:160px;width:1111px;height:26px;background:#fdfdfd;border:1px solid #c6c6c6"></div>
<svg class="b" style="left:1349px;top:170px" width="8" height="6" viewBox="0 0 8 6"><path d="M0.8 0.8 L4 4 L7.2 0.8" fill="none" stroke="#606060" stroke-width="1.9"/></svg>
</div>
<div class="g" id="sheet">
<div class="b" style="left:0px;top:196px;width:1344px;height:483px;background:#fff;border:1px solid #a6a6a6"></div>
<div class="b" style="left:1px;top:197px;width:58px;height:1px;background:#1a6e3e"></div>
<div class="b" style="left:1px;top:197px;width:1px;height:25px;background:#1a6e3e"></div>
<div class="b" style="left:57px;top:197px;width:2px;height:20px;background:#1a6e3e"></div>
<div class="b" style="left:1px;top:220px;width:53px;height:2px;background:#1a6e3e"></div>
<div class="b" style="left:55px;top:218px;width:5px;height:5px;background:#217346"></div>
<span class="t" style="left:434.58px;top:200px;font-size:16px;color:#ff0000;transform:scaleX(0.9684);font-weight:bold">CONTROLE DE ESTOQUE 1.0</span>
<div class="b" style="left:797px;top:197px;width:68px;height:24px;border:1px solid #000;border-top:none"></div>
<span class="t" style="left:810.82px;top:199px;font-size:12px;color:#0000ff;transform:scaleX(0.9275);font-weight:bold">Ajuda ?</span>
<div class="b" style="left:811px;top:214px;width:40px;height:1px;background:#0000ff"></div>
<div class="g" id="banner">
<svg class="b" style="left:406px;top:246px;overflow:hidden" width="276" height="92" viewBox="0 0 276 92"><defs><linearGradient id="bg" x1="0" y1="0" x2="1" y2="0"><stop offset="0" stop-color="#ea5f3f"/><stop offset="0.25" stop-color="#e05a46"/><stop offset="0.41" stop-color="#d7554c"/><stop offset="0.49" stop-color="#ce5354"/><stop offset="0.59" stop-color="#ba4f53"/><stop offset="0.70" stop-color="#ab4c50"/><stop offset="0.78" stop-color="#9f484b"/><stop offset="0.885" stop-color="#8d4446"/><stop offset="1" stop-color="#874244"/></linearGradient><linearGradient id="scr" x1="0" y1="0" x2="1" y2="0.6"><stop offset="0" stop-color="#e2e2e2"/><stop offset="1" stop-color="#c6c6c6"/></linearGradient><linearGradient id="refl" x1="0" y1="0" x2="0" y2="1"><stop offset="0" stop-color="#fff" stop-opacity="0.28"/><stop offset="1" stop-color="#fff" stop-opacity="0.04"/></linearGradient></defs><rect width="276" height="92" fill="url(#bg)"/><path d="M0 38 L52 92 H0 Z" fill="#f26d4b" opacity="0.5"/><path d="M22 0 L84 0 L58 34 Z" fill="#f0694a" opacity="0.22"/><path d="M96 18 L150 0 L166 44 L120 60 Z" fill="#e26457" opacity="0.22"/><path d="M80 74 L96 55 L108 84 Z" fill="#e4665c" opacity="0.3"/><path d="M108 92 L120 60 L130 92 Z" fill="#e0676a" opacity="0.3"/><path d="M134 0 L176 0 L150 40 Z" fill="#c85a5e" opacity="0.3"/><path d="M168 0 L228 0 L196 30 Z" fill="#b9585c" opacity="0.25"/><path d="M262 0 H276 V92 H250 Z" fill="#6e3637" opacity="0.12"/><path d="M194.5 76 H261.4 V92 H199 Z" fill="url(#refl)"/><path d="M135.7 76.2 H196 V77.4 H140 Z" fill="#fff" opacity="0.12"/><path d="M207.1 25.9 L264 10.1 L258 73.3 H194.5 Z" fill="#f5f5f5"/><path d="M209.4 28.2 L262 13.5 L256.4 69.4 H197.4 Z" fill="url(#scr)"/><path d="M224.8 24.6 L238 41.7 L229.8 51.8 L241.2 63.2 L243.1 35.4 L252.6 19.6 L231.1 34.8 L241.2 63.2 M231.1 34.8 L243.1 35.4 L229.8 51.8 M238 41.7 L252.6 19.6 L257.6 22.7 L243.1 35.4 M224.8 24.6 L243.1 35.4 M238 41.7 L250 46 L241.2 63.2 M250 46 L257.6 22.7 M231.1 34.8 L238 41.7 L250 46" fill="none" stroke="#3c3c3c" stroke-width="0.45"/><circle cx="238" cy="41.7" r="1.1" fill="#9c2a2a"/><circle cx="231.1" cy="34.8" r="0.7" fill="#9c2a2a"/><circle cx="243.1" cy="35.4" r="0.7" fill="#9c2a2a"/><circle cx="241.2" cy="63.2" r="0.8" fill="#9c2a2a"/><circle cx="229.8" cy="51.8" r="0.6" fill="#9c2a2a"/><circle cx="252.6" cy="19.6" r="0.7" fill="#9c2a2a"/><text x="208.4" y="56.4" font-size="6" font-style="italic" font-weight="bold" fill="#5a5a5a" font-family="Liberation Sans, sans-serif" textLength="18.6" lengthAdjust="spacingAndGlyphs" transform="rotate(-12 208.4 56.4)">egestor</text><path d="M220.9 43.2 A2.5 2.5 0 1 0 220.4 45.6" fill="none" stroke="#4a4a4a" stroke-width="1.3"/><rect x="217.6" y="43" width="3.2" height="1" fill="#4a4a4a"/><rect x="246.9" y="33.5" width="14.5" height="41.7" rx="1.8" fill="#f7f7f7" stroke="#d8d8d8" stroke-width="0.4"/><rect x="248" y="37.6" width="12.3" height="33" fill="#e0e0e0"/><path d="M248.2 42 L259.8 48 L252 60 L260 56 M259.8 40 L250 54 L260 50" fill="none" stroke="#4a4a4a" stroke-width="0.4"/><path d="M135.7 72.9 H246.9 V75 C220 76.2 170 76 140 74.6 Z" fill="#ececec"/><path d="M137 74.4 C170 76.4 220 76.6 246.9 75.4" fill="none" stroke="#7e7e7e" stroke-width="0.7"/><rect x="236" y="73.2" width="1.6" height="0.9" fill="#555"/><rect x="240" y="73.2" width="3" height="0.9" fill="#333"/><text x="38.1" y="45.5" font-size="16.7" font-weight="bold" fill="#fff" font-family="Liberation Sans, sans-serif" textLength="74.5" lengthAdjust="spacingAndGlyphs">egestor</text><g fill="none" stroke="#fff" stroke-width="5"><path d="M129.8 35.2 A6.8 6.8 0 0 1 138.6 40.2"/><path d="M137.6 45.3 A6.8 6.8 0 0 1 125.2 42.6"/></g><rect x="129.3" y="38.9" width="11.8" height="3.1" fill="#fff"/><g fill="#fff"><rect x="123.4" y="33.4" width="2.6" height="2.6"/><rect x="120.6" y="36.2" width="2.4" height="2.4"/><rect x="123.6" y="38.8" width="2.2" height="2.2"/><rect x="118.2" y="38.8" width="2" height="2"/><rect x="115.8" y="36.8" width="1.6" height="1.6" opacity="0.8"/><rect x="120.8" y="31.2" width="1.8" height="1.8" opacity="0.85"/><rect x="113.6" y="38.6" width="1.4" height="1.4" opacity="0.6"/></g></svg>
</div>
<div class="g" id="menu">
<div class="b" style="left:405px;top:345px;width:277px;height:26px;border:1px solid #000"></div>
<div class="b" style="left:405px;top:395px;width:277px;height:26px;border:1px solid #000"></div>
<div class="b" style="left:405px;top:445px;width:277px;height:26px;border:1px solid #000"></div>
<span class="t" style="left:457.29px;top:350px;font-size:17px;color:#0000ff;transform:scaleX(0.9909);font-weight:bold">Unidades de Medidas</span>
<div class="b" style="left:458px;top:367px;width:171px;height:1.6px;background:#0000ff"></div>
<span class="t" style="left:474.54px;top:400px;font-size:17px;color:#0000ff;transform:scaleX(0.9744);font-weight:bold">Cadastro de Itens</span>
<div class="b" style="left:475px;top:417px;width:138px;height:1.6px;background:#0000ff"></div>
<span class="t" style="left:495.93px;top:450px;font-size:17px;color:#0000ff;transform:scaleX(1.0560);font-weight:bold">Movimento</span>
<div class="b" style="left:497px;top:467px;width:93px;height:1.6px;background:#0000ff"></div>
<span class="t" style="left:516.46px;top:500px;font-size:15.5px;color:#000;transform:scaleX(1.1353);font-weight:bold">Meses</span>
<div class="b" style="left:405px;top:520px;width:277px;height:101px;border:1px solid #000"></div>
<div class="b" style="left:405px;top:545px;width:277px;height:1px;background:#000"></div>
<div class="b" style="left:405px;top:570px;width:277px;height:1px;background:#000"></div>
<div class="b" style="left:405px;top:595px;width:277px;height:1px;background:#000"></div>
<div class="b" style="left:497px;top:520px;width:1px;height:101px;background:#000"></div>
<div class="b" style="left:589px;top:520px;width:1px;height:101px;background:#000"></div>
<span class="t" style="left:439.79px;top:525px;font-size:15.5px;color:#0000ff;transform:scaleX(0.9007);font-weight:bold">Jan</span>
<div class="b" style="left:440px;top:542px;width:23px;height:1px;background:#0000ff"></div>
<span class="t" style="left:530.23px;top:525px;font-size:15.5px;color:#0000ff;transform:scaleX(0.9668);font-weight:bold">Fev</span>
<div class="b" style="left:531px;top:542px;width:25px;height:1px;background:#0000ff"></div>
<span class="t" style="left:620.11px;top:525px;font-size:15.5px;color:#0000ff;transform:scaleX(1.0854);font-weight:bold">Mar</span>
<div class="b" style="left:621px;top:542px;width:29px;height:1px;background:#0000ff"></div>
<span class="t" style="left:438.53px;top:550px;font-size:15.5px;color:#0000ff;transform:scaleX(0.9510);font-weight:bold">Abr</span>
<div class="b" style="left:439px;top:567px;width:25px;height:1px;background:#0000ff"></div>
<span class="t" style="left:528.86px;top:550px;font-size:15.5px;color:#0000ff;transform:scaleX(1.1325);font-weight:bold">Mai</span>
<div class="b" style="left:530px;top:567px;width:27px;height:1px;background:#0000ff"></div>
<span class="t" style="left:623.79px;top:550px;font-size:15.5px;color:#0000ff;transform:scaleX(0.8943);font-weight:bold">Jun</span>
<div class="b" style="left:624px;top:567px;width:24px;height:1px;background:#0000ff"></div>
<span class="t" style="left:441.59px;top:575px;font-size:15.5px;color:#0000ff;transform:scaleX(0.8871);font-weight:bold">Jul</span>
<div class="b" style="left:442px;top:592px;width:18px;height:1px;background:#0000ff"></div>
<span class="t" style="left:529.64px;top:575px;font-size:15.5px;color:#0000ff;transform:scaleX(0.9231);font-weight:bold">Ago</span>
<div class="b" style="left:530px;top:592px;width:27px;height:1px;background:#0000ff"></div>
<span class="t" style="left:623.59px;top:575px;font-size:15.5px;color:#0000ff;transform:scaleX(0.9566);font-weight:bold">Set</span>
<div class="b" style="left:624px;top:592px;width:22px;height:1px;background:#0000ff"></div>
<span class="t" style="left:437.67px;top:600px;font-size:15.5px;color:#0000ff;transform:scaleX(1.0238);font-weight:bold">Out</span>
<div class="b" style="left:438px;top:617px;width:27px;height:1px;background:#0000ff"></div>
<span class="t" style="left:529.00px;top:600px;font-size:15.5px;color:#0000ff;transform:scaleX(0.9926);font-weight:bold">Nov</span>
<div class="b" style="left:530px;top:617px;width:28px;height:1px;background:#0000ff"></div>
<span class="t" style="left:621.28px;top:600px;font-size:15.5px;color:#0000ff;transform:scaleX(1.0153);font-weight:bold">Dez</span>
<div class="b" style="left:622px;top:617px;width:27px;height:1px;background:#0000ff"></div>
</div>
<div class="g" id="scrollbars">
<div class="b" style="left:1348px;top:198px;width:15px;height:15px;background:#fff;border:1px solid #bdbdbd"></div>
<svg class="b" style="left:1352px;top:203px" width="7" height="4" viewBox="0 0 7 4"><path d="M0 4 H7 L3.5 0 Z" fill="#6a6a6a"/></svg>
<div class="b" style="left:1348px;top:213px;width:15px;height:428px;background:#fff;border:1px solid #ababab"></div>
<div class="b" style="left:1348px;top:641px;width:15px;height:23px;background:#dcdcdc"></div>
<div class="b" style="left:1348px;top:664px;width:15px;height:15px;background:#fff;border:1px solid #bdbdbd"></div>
<svg class="b" style="left:1352px;top:670px" width="7" height="4" viewBox="0 0 7 4"><path d="M0 0 H7 L3.5 4 Z" fill="#6a6a6a"/></svg>
</div>
</div>
<div class="g" id="sheettabs">
<div class="b" style="left:0px;top:679px;width:1366px;height:27px;background:#e6e6e6"></div>
<svg class="b" style="left:26px;top:688px" width="6" height="7" viewBox="0 0 6 7"><path d="M5.4 0 V7 L0.6 3.5 Z" fill="#c4c4c4"/></svg>
<svg class="b" style="left:55px;top:688px" width="6" height="7" viewBox="0 0 6 7"><path d="M0.6 0 V7 L5.4 3.5 Z" fill="#217346"/></svg>
<div class="b" style="left:100px;top:678px;width:63px;height:25px;background:#fff;border:1px solid #ababab;border-top:none;border-bottom:none"></div>
<div class="b" style="left:100px;top:701px;width:63px;height:2px;background:#217346"></div>
<span class="t" style="left:111.74px;top:681px;font-size:14px;color:#217346;transform:scaleX(0.9397);font-weight:bold">MENU</span>
<div class="b" style="left:165px;top:681px;width:55px;height:22px;background:#0a0a0a"></div>
<span class="t" style="left:175.00px;top:682px;font-size:12.5px;color:#fff;transform:scaleX(1.0219)">Ajuda</span>
<div class="b" style="left:222px;top:682px;width:1px;height:20px;background:#ababab"></div>
<div class="b" style="left:393px;top:682px;width:1px;height:20px;background:#ababab"></div>
<div class="b" style="left:505px;top:682px;width:1px;height:20px;background:#ababab"></div>
<div class="b" style="left:600px;top:682px;width:1px;height:20px;background:#ababab"></div>
<div class="b" style="left:638px;top:682px;width:1px;height:20px;background:#ababab"></div>
<div class="b" style="left:676px;top:682px;width:1px;height:20px;background:#ababab"></div>
<div class="b" style="left:714px;top:682px;width:1px;height:20px;background:#ababab"></div>
<span class="t" style="left:235.43px;top:682px;font-size:12.5px;color:#404040;transform:scaleX(1.0674)">Cadastro Unid. Medidas</span>
<span class="t" style="left:406.75px;top:682px;font-size:12.5px;color:#404040;transform:scaleX(1.0409)">Cadastro Itens</span>
<span class="t" style="left:518.20px;top:682px;font-size:12.5px;color:#404040;transform:scaleX(1.0952)">Movimento</span>
<span class="t" style="left:611.52px;top:682px;font-size:12.5px;color:#404040;transform:scaleX(1.0224)">01</span>
<span class="t" style="left:649.92px;top:682px;font-size:12.5px;color:#404040;transform:scaleX(1.0302)">02</span>
<span class="t" style="left:687.71px;top:682px;font-size:12.5px;color:#404040;transform:scaleX(1.0408)">03</span>
<span class="t" style="left:725.70px;top:682px;font-size:12.5px;color:#404040;transform:scaleX(1.0565)">04</span>
<span class="t" style="left:757.66px;top:682px;font-size:13px;color:#217346;transform:scaleX(1.1800);font-weight:bold">...</span>
<svg class="b" style="left:782px;top:684px" width="17" height="17" viewBox="0 0 17 17"><circle cx="9" cy="8" r="7.4" fill="none" stroke="#777" stroke-width="1.1"/><path d="M9 4 V12 M5 8 H13" stroke="#666" stroke-width="2"/></svg>
<div class="b" style="left:819px;top:687px;width:2px;height:2px;background:#b0b0b0"></div>
<div class="b" style="left:819px;top:691px;width:2px;height:2px;background:#b0b0b0"></div>
<div class="b" style="left:819px;top:695px;width:2px;height:2px;background:#b0b0b0"></div>
<div class="b" style="left:836px;top:685px;width:15px;height:15px;background:#fff;border:1px solid #bdbdbd"></div>
<svg class="b" style="left:841px;top:689px" width="4" height="7" viewBox="0 0 4 7"><path d="M4 0 V7 L0 3.5 Z" fill="#6a6a6a"/></svg>
<div class="b" style="left:851px;top:685px;width:456px;height:15px;background:#fff;border:1px solid #ababab"></div>
<div class="b" style="left:1307px;top:685px;width:23px;height:15px;background:#dcdcdc"></div>
<div class="b" style="left:1330px;top:685px;width:15px;height:15px;background:#fff;border:1px solid #bdbdbd"></div>
<svg class="b" style="left:1336px;top:689px" width="4" height="7" viewBox="0 0 4 7"><path d="M0 0 V7 L4 3.5 Z" fill="#6a6a6a"/></svg>
</div>
<div class="g" id="statusbar">
<div class="b" style="left:0px;top:706px;width:1366px;height:22px;background:#f1f1f1;border-top:1px solid #c8c8c8"></div>
<span class="t" style="left:6.74px;top:707px;font-size:11.5px;color:#454545;transform:scaleX(1.0404)">Pronto</span>
<div class="b" style="left:1080px;top:707px;width:38px;height:21px;background:#c8c8c8"></div>
<svg class="b" style="left:1092px;top:710px" width="13" height="13" viewBox="0 0 13 13"><path d="M0.5 0 V13 M4.5 0 V13 M8.5 0 V13 M12.5 0 V13 M0 0.5 H13 M0 4.5 H13 M0 8.5 H13 M0 12.5 H13" stroke="#6a6a6a" stroke-width="1" fill="none"/></svg>
<svg class="b" style="left:1130px;top:710px" width="14" height="13" viewBox="0 0 14 13"><rect x="0.5" y="0.5" width="13" height="12" fill="none" stroke="#6a6a6a" stroke-width="1"/><rect x="3.5" y="2.5" width="7" height="8" fill="none" stroke="#6a6a6a" stroke-width="1"/><path d="M5 4.5 H9 M5 6.5 H9 M5 8.5 H9" stroke="#6a6a6a" stroke-width="1"/></svg>
<svg class="b" style="left:1168px;top:710px" width="14" height="13" viewBox="0 0 14 13"><rect x="0.5" y="0.5" width="13" height="12" fill="none" stroke="#6a6a6a" stroke-width="1"/><path d="M0.5 7.5 H8.5 V0.5 M4.5 0.5 V7.5" fill="none" stroke="#6a6a6a" stroke-width="1"/></svg>
<div class="b" style="left:1199px;top:716px;width:6px;height:2px;background:#555"></div>
<div class="b" style="left:1209px;top:717px;width:100px;height:1px;background:#a0a0a0"></div>
<div class="b" style="left:1252px;top:711px;width:4px;height:11px;background:#5a5a5a"></div>
<div class="b" style="left:1259px;top:714px;width:1px;height:6px;background:#a0a0a0"></div>
<div class="b" style="left:1313px;top:716px;width:8px;height:2px;background:#555"></div>
<div class="b" style="left:1316px;top:713px;width:2px;height:8px;background:#555"></div>
<span class="t" style="left:1335.30px;top:707px;font-size:11.5px;color:#454545;transform:scaleX(0.9589)">90%</span>
</div>
</body></html>
